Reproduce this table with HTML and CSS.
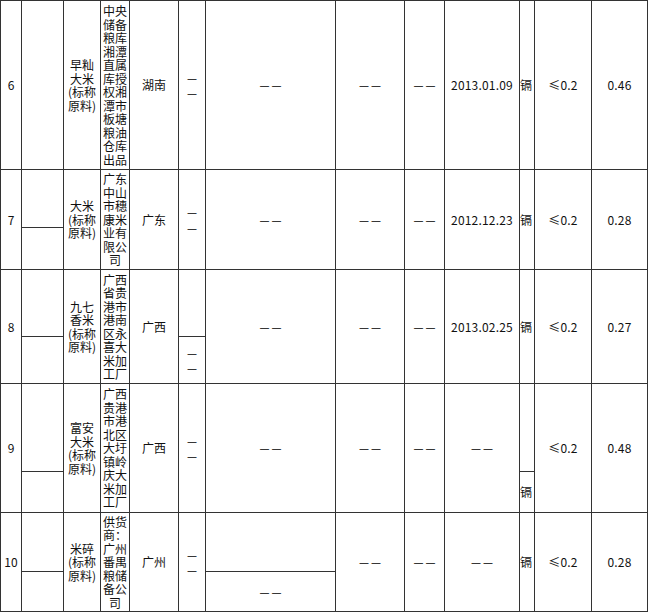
FILE: index.html
```html
<!DOCTYPE html>
<html lang="zh-CN">
<head>
<meta charset="utf-8">
<title>抽检结果</title>
<link rel="stylesheet" href="styles.css">
</head>
<body>
<table class="grid">
<colgroup>
<col class="w-no"><col class="w-b"><col class="w-name"><col class="w-prod"><col class="w-reg"><col class="w-f"><col class="w-g"><col class="w-h"><col class="w-i"><col class="w-date"><col class="w-item"><col class="w-std"><col class="w-val">
</colgroup>
<tbody>
<tr class="r6">
<td class="num">6</td>
<td></td>
<td>早籼<br>大米<br>(标称<br>原料)</td>
<td>中央<br>储备<br>粮库<br>湘潭<br>直属<br>库授<br>权湘<br>潭市<br>板塘<br>粮油<br>仓库<br>出品</td>
<td>湖南</td>
<td><span class="dsh">—</span><br><span class="dsh">—</span></td>
<td><span class="dsh">——</span></td>
<td><span class="dsh">——</span></td>
<td><span class="dsh">——</span></td>
<td class="mono">2013.01.09</td>
<td class="item">镉</td>
<td class="mono">≤0.2</td>
<td class="mono">0.46</td>
</tr>

<tr class="r7a">
<td class="num" rowspan="2">7</td>
<td></td>
<td rowspan="2">大米<br>(标称<br>原料)</td>
<td rowspan="2">广东<br>中山<br>市穗<br>康米<br>业有<br>限公<br>司</td>
<td rowspan="2">广东</td>
<td rowspan="2"><span class="dsh">—</span><br><span class="dsh">—</span></td>
<td rowspan="2"><span class="dsh">——</span></td>
<td rowspan="2"><span class="dsh">——</span></td>
<td rowspan="2"><span class="dsh">——</span></td>
<td rowspan="2" class="mono">2012.12.23</td>
<td rowspan="2" class="item">镉</td>
<td rowspan="2" class="mono">≤0.2</td>
<td rowspan="2" class="mono">0.28</td>
</tr>
<tr class="r7b"><td></td></tr>

<tr class="r8a">
<td class="num" rowspan="2">8</td>
<td></td>
<td rowspan="2">九七<br>香米<br>(标称<br>原料)</td>
<td rowspan="2">广西<br>省贵<br>港市<br>港南<br>区永<br>喜大<br>米加<br>工厂</td>
<td rowspan="2">广西</td>
<td></td>
<td rowspan="2"><span class="dsh">——</span></td>
<td rowspan="2"><span class="dsh">——</span></td>
<td rowspan="2"><span class="dsh">——</span></td>
<td rowspan="2" class="mono">2013.02.25</td>
<td rowspan="2" class="item">镉</td>
<td rowspan="2" class="mono">≤0.2</td>
<td rowspan="2" class="mono">0.27</td>
</tr>
<tr class="r8b"><td></td><td><span class="dsh">—</span><br><span class="dsh">—</span></td></tr>

<tr class="r9a">
<td class="num" rowspan="2">9</td>
<td></td>
<td rowspan="2">富安<br>大米<br>(标称<br>原料)</td>
<td rowspan="2">广西<br>贵港<br>市港<br>北区<br>大圩<br>镇岭<br>庆大<br>米加<br>工厂</td>
<td rowspan="2">广西</td>
<td rowspan="2"><span class="dsh">—</span><br><span class="dsh">—</span></td>
<td rowspan="2"><span class="dsh">——</span></td>
<td rowspan="2"><span class="dsh">——</span></td>
<td rowspan="2"><span class="dsh">——</span></td>
<td rowspan="2"><span class="dsh">——</span></td>
<td class="item"></td>
<td rowspan="2" class="mono">≤0.2</td>
<td rowspan="2" class="mono">0.48</td>
</tr>
<tr class="r9b"><td></td><td class="item">镉</td></tr>

<tr class="r10a">
<td class="num" rowspan="2">10</td>
<td></td>
<td rowspan="2">米碎<br>(标称<br>原料)</td>
<td rowspan="2">供货<br>商：<br>广州<br>番禺<br>粮储<br>备公<br>司</td>
<td rowspan="2">广州</td>
<td rowspan="2"><span class="dsh">—</span><br><span class="dsh">—</span></td>
<td></td>
<td rowspan="2"><span class="dsh">——</span></td>
<td rowspan="2"><span class="dsh">——</span></td>
<td rowspan="2"><span class="dsh">——</span></td>
<td rowspan="2" class="item">镉</td>
<td rowspan="2" class="mono">≤0.2</td>
<td rowspan="2" class="mono">0.28</td>
</tr>
<tr class="r10b"><td></td><td><span class="dsh">——</span></td></tr>
</tbody>
</table>
</body>
</html>
```

FILE: styles.css
```css
html, body {
  margin: 0;
  padding: 0;
  background: #ffffff;
}

body {
  font-family: "Noto Sans CJK SC", "Liberation Sans", sans-serif;
  font-size: 12px;
  color: #111111;
}

.grid {
  border-collapse: separate;
  border-spacing: 0;
  table-layout: fixed;
  width: 648px;
  border-left: 1px solid #333333;
  border-top: 1px solid #333333;
}

.grid td {
  box-sizing: border-box;
  border-right: 1px solid #333333;
  border-bottom: 1px solid #333333;
  padding: 0;
  text-align: center;
  vertical-align: middle;
  line-height: 13.5px;
  white-space: nowrap;
  overflow: hidden;
}

.w-no { width: 21px; }
.w-b { width: 42px; }
.w-name { width: 37px; }
.w-prod { width: 29px; }
.w-reg { width: 49px; }
.w-f { width: 27px; }
.w-g { width: 130px; }
.w-h { width: 69px; }
.w-i { width: 40px; }
.w-date { width: 75px; }
.w-item { width: 15px; }
.w-std { width: 57px; }
.w-val { width: 56px; }

.r6 { height: 169px; }
.r7a { height: 58px; }
.r7b { height: 42px; }
.r8a { height: 67px; }
.r8b { height: 47px; }
.r9a { height: 88px; }
.r9b { height: 41px; }
.r10a { height: 59px; }
.r10b { height: 40px; }

.grid td.item {
  text-align: left;
}

.mono {
  letter-spacing: 0.2px;
}

.dsh {
  font-family: "DejaVu Sans", "Liberation Sans", sans-serif;
  font-size: 10px;
  letter-spacing: 2px;
  margin-right: -2px;
  line-height: 13.5px;
  color: #000000;
}
```
